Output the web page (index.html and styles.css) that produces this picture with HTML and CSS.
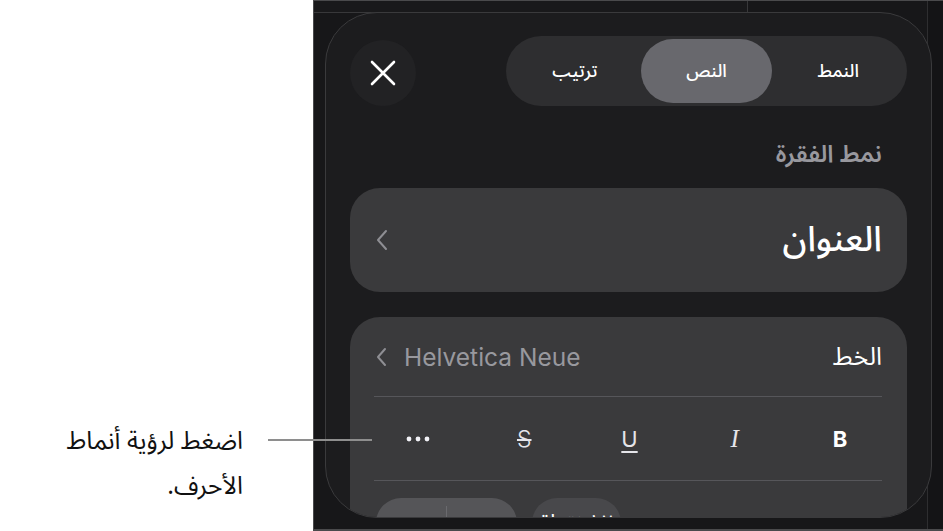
FILE: index.html
```html
<!DOCTYPE html>
<html lang="ar">
<head>
  <meta charset="UTF-8">
  <title>أنماط النص</title>
  <link rel="stylesheet" href="styles.css">
</head>
<body>

  <div class="page">
    <div class="note">
      <p class="note-text">اضغط لرؤية أنماط الأحرف.</p>
    </div>

    <div class="callout"></div>

    <div class="screen">
      <div class="sheet" dir="rtl">

        <div class="sheet-header">
          <div class="tabs">
            <div class="tab">النمط</div>
            <div class="tab active">النص</div>
            <div class="tab">ترتيب</div>
          </div>
          <div class="close-btn">
            <svg width="26" height="26" viewBox="0 0 26 26">
              <path d="M2 2 L24 24 M24 2 L2 24" stroke="#fff" stroke-width="2.6" stroke-linecap="round"/>
            </svg>
          </div>
        </div>

        <div class="section-title">نمط الفقرة</div>

        <div class="card para-style">
          <span class="para-name">العنوان</span>
          <svg class="chevron" width="12" height="22" viewBox="0 0 12 22">
            <polyline points="10,2 2,11 10,20" fill="none" stroke="#8e8e93" stroke-width="2" stroke-linecap="round" stroke-linejoin="round"/>
          </svg>
        </div>

        <div class="card font-card">
          <div class="font-row">
            <span class="row-label">الخط</span>
            <span class="font-pick" dir="ltr">
              <svg width="11" height="20" viewBox="0 0 11 20">
                <polyline points="9,2 2,10 9,18" fill="none" stroke="#8e8e93" stroke-width="2" stroke-linecap="round" stroke-linejoin="round"/>
              </svg>
              <span>Helvetica Neue</span>
            </span>
          </div>

          <div class="format-row">
            <span class="fmt fmt-b">B</span>
            <span class="fmt fmt-i">I</span>
            <span class="fmt fmt-u">U</span>
            <span class="fmt fmt-s">S</span>
            <span class="fmt fmt-more">
              <svg width="24" height="6" viewBox="0 0 24 6">
                <circle cx="3" cy="3" r="2.4" fill="#f2f2f7"/>
                <circle cx="12" cy="3" r="2.4" fill="#f2f2f7"/>
                <circle cx="21" cy="3" r="2.4" fill="#f2f2f7"/>
              </svg>
            </span>
          </div>

          <div class="size-row">
            <span class="row-label">الحجم</span>
            <div class="size-controls">
              <div class="pill value">١٢ نقطة</div>
              <div class="pill stepper">
                <span class="step">−</span>
                <span class="step">+</span>
              </div>
            </div>
          </div>
        </div>

      </div>
    </div>
  </div>

</body>
</html>
```

FILE: styles.css
```css
* {
  box-sizing: border-box;
}

body {
  margin: 0;
  background: #fff;
  font-family: "Noto Sans Arabic", "DejaVu Sans", sans-serif;
}

.page {
  position: relative;
  display: flex;
  width: 943px;
  height: 531px;
  overflow: hidden;
}

/* caption on the white side */
.note {
  width: 313px;
  padding: 419px 70px 0 0;
}

.note-text {
  width: 200px;
  margin: 0 0 0 auto;
  direction: rtl;
  text-align: right;
  font-size: 25px;
  line-height: 45px;
  color: #111;
}

/* leader line pointing at the "more" button */
.callout {
  position: absolute;
  left: 268px;
  top: 439px;
  width: 104px;
  height: 2px;
  background: #8e8e8e;
  z-index: 5;
}

/* device screen */
.screen {
  position: relative;
  width: 630px;
  height: 531px;
  background: #171719;
  border-left: 1px solid #4a4a4c;
  border-top: 1px solid #4a4a4c;
  border-bottom: 2px solid #4a4a4c;
}

/* windows behind the popover */
.screen::before {
  content: "";
  position: absolute;
  left: 0;
  top: 0;
  width: 433px;
  height: 11px;
  background: #19191b;
  border-right: 1px solid #38383a;
  border-bottom: 1px solid #38383a;
}

.screen::after {
  content: "";
  position: absolute;
  left: 613px;
  top: 0;
  width: 16px;
  height: 100%;
  background: #141416;
  border-left: 1px solid #2e2e30;
}

.sheet {
  position: relative;
  z-index: 1;
  margin: 11px 11px 0 11px;
  height: 506px;
  padding: 23px 24px 0 24px;
  background: #1c1c1e;
  border: 1px solid #3a3a3c;
  border-radius: 52px;
  overflow: hidden;
}

.sheet-header {
  display: flex;
  align-items: center;
  justify-content: space-between;
  height: 70px;
}

.tabs {
  display: flex;
  width: 401px;
  height: 70px;
  padding: 3px;
  background: #2e2e30;
  border-radius: 35px;
}

.tab {
  flex: 1;
  display: flex;
  align-items: center;
  justify-content: center;
  border-radius: 32px;
  color: #fff;
  font-size: 18px;
  font-weight: 500;
}

.tab.active {
  background: #68686d;
}

.close-btn {
  width: 66px;
  height: 66px;
  border-radius: 50%;
  background: #222224;
  display: flex;
  align-items: center;
  justify-content: center;
  margin-top: 4px;
}

.section-title {
  margin-top: 34px;
  padding-right: 25px;
  line-height: 30px;
  font-size: 24px;
  font-weight: 600;
  color: #98989e;
}

.card {
  background: #3a3a3c;
  border-radius: 30px;
}

.para-style {
  margin-top: 18px;
  height: 104px;
  display: flex;
  align-items: center;
  justify-content: space-between;
  padding: 0 25px 0 26px;
}

.para-name {
  font-size: 35px;
  font-weight: 500;
  color: #fff;
}

.font-card {
  margin-top: 25px;
  padding: 0 25px 0 24px;
}

.font-row {
  height: 80px;
  display: flex;
  align-items: center;
  justify-content: space-between;
  border-bottom: 1px solid #56565a;
}

.row-label {
  font-size: 25px;
  color: #fff;
}

.font-pick {
  display: flex;
  align-items: center;
  gap: 17px;
  font-family: Inter, "Liberation Sans", sans-serif;
  font-size: 24.5px;
  color: #98989e;
  padding-left: 2px;
}

.format-row {
  height: 84px;
  display: flex;
  align-items: center;
  justify-content: space-between;
  padding: 0 30px 0 31px;
  border-bottom: 1px solid #56565a;
}

.fmt {
  width: 24px;
  text-align: center;
  font-family: Inter, "Liberation Sans", sans-serif;
  font-size: 22px;
  color: #e5e5ea;
  line-height: 28px;
}

.fmt-b {
  font-weight: 700;
  color: #fff;
}

.fmt-i {
  font-family: "Liberation Serif", serif;
  font-style: italic;
  font-size: 25px;
}

.fmt-u {
  text-decoration: underline;
  text-underline-offset: 4px;
  text-decoration-thickness: 2px;
}

.fmt-s {
  font-size: 23px;
  font-weight: 300;
  text-decoration: line-through;
  text-decoration-thickness: 2px;
}

.fmt-more {
  display: flex;
  align-items: center;
  justify-content: center;
  width: 26px;
}

.size-row {
  display: flex;
  align-items: flex-start;
  justify-content: space-between;
  padding-top: 17px;
}

.size-row .row-label {
  padding-top: 12px;
}

.size-controls {
  display: flex;
  gap: 15px;
  margin-left: 2px;
}

.pill {
  height: 50px;
  border-radius: 25px;
  display: flex;
  align-items: center;
  justify-content: center;
  color: #fff;
  font-size: 22px;
}

.pill.value {
  width: 89px;
  background: #48484b;
}

.pill.stepper {
  width: 141px;
  background: #555558;
}

.step {
  flex: 1;
  text-align: center;
  font-family: Inter, "Liberation Sans", sans-serif;
  font-size: 28px;
}

.step + .step {
  border-right: 1px solid #6a6a6e;
}
```
